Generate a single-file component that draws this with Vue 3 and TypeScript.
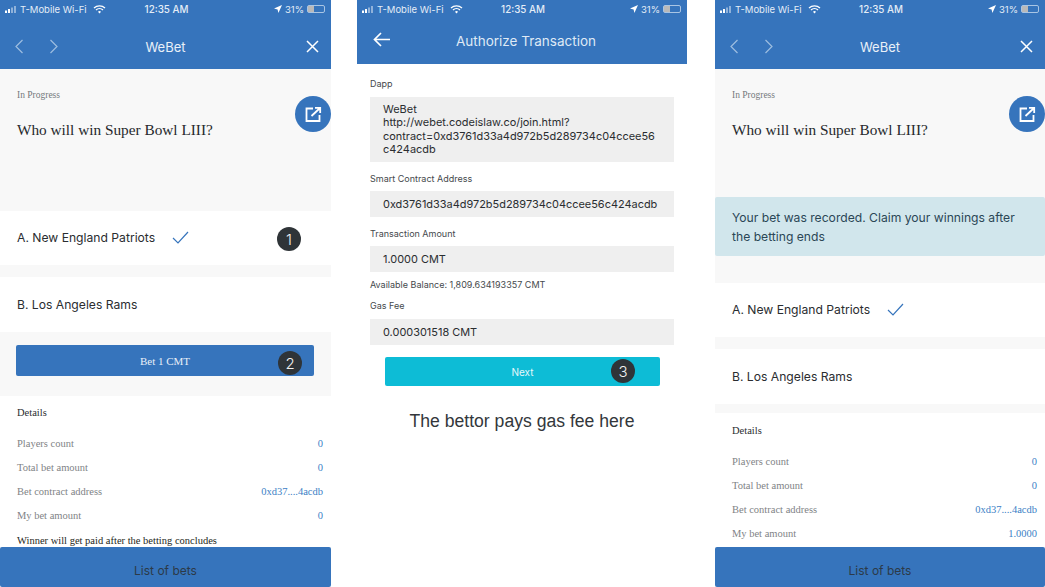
<script setup lang="ts">
interface DetailRow { label: string; value: string }
interface BetScreen {
  id: string;
  alert: string;
  badge: boolean;
  details: DetailRow[];
  footnote: string;
}

const contract = '0xd37....4acdb';

const screens: BetScreen[] = [
  {
    id: 'before',
    alert: '',
    badge: true,
    details: [
      { label: 'Players count', value: '0' },
      { label: 'Total bet amount', value: '0' },
      { label: 'Bet contract address', value: contract },
      { label: 'My bet amount', value: '0' },
    ],
    footnote: 'Winner will get paid after the betting concludes',
  },
  {
    id: 'after',
    alert: 'Your bet was recorded. Claim your winnings after the betting ends',
    badge: false,
    details: [
      { label: 'Players count', value: '0' },
      { label: 'Total bet amount', value: '0' },
      { label: 'Bet contract address', value: contract },
      { label: 'My bet amount', value: '1.0000' },
    ],
    footnote: '',
  },
];
</script>

<template>
  <div class="page">
    <template v-for="(s, i) in screens" :key="s.id">
      <section class="phone" :class="s.id">
        <div class="status">
          <span class="st-left">
            <svg class="signal" width="12" height="7" viewBox="0 0 12 7">
              <rect x="0" y="4.5" width="2" height="2.5" fill="#fff" />
              <rect x="3" y="3" width="2" height="4" fill="#fff" />
              <rect x="6" y="1.5" width="2" height="5.5" fill="#fff" opacity=".45" />
              <rect x="9" y="0" width="2" height="7" fill="#fff" opacity=".45" />
            </svg>
            T-Mobile Wi-Fi
            <svg class="wifi" width="13" height="9" viewBox="0 0 13 9" fill="none" stroke="#fff" stroke-width="1.3">
              <path d="M1 3a8 8 0 0 1 11 0M3 5a5 5 0 0 1 7 0" />
              <path d="M6.5 8.6 5 6.7a2.2 2.2 0 0 1 3 0z" fill="#fff" stroke="none" />
            </svg>
          </span>
          <span class="st-time">12:35 AM</span>
          <span class="st-right">
            <svg width="8" height="8" viewBox="0 0 8 8"><path d="M8 0 0 3.6l3.6.8.8 3.6z" fill="#fff" /></svg>
            31%
            <span class="battery"><i></i></span>
          </span>
        </div>
        <header class="nav">
          <span class="nav-arrows">
            <svg width="10" height="15" viewBox="0 0 10 15" fill="none" stroke="#9dbde0" stroke-width="1.2"><path d="M8.5 1 2 7.5 8.5 14" /></svg>
            <svg width="10" height="15" viewBox="0 0 10 15" fill="none" stroke="#9dbde0" stroke-width="1.2"><path d="M1.5 1 8 7.5 1.5 14" /></svg>
          </span>
          <span class="nav-title">WeBet</span>
          <svg class="nav-close" width="13" height="13" viewBox="0 0 13 13" stroke="#fff" stroke-width="1.5"><path d="M1 1l11 11M12 1 1 12" /></svg>
        </header>

        <main class="body">
          <div class="intro">
            <p class="state">In Progress</p>
            <h1 class="question">Who will win Super Bowl LIII?</h1>
            <span class="fab">
              <svg width="17" height="17" viewBox="0 0 17 17" fill="none" stroke="#fff" stroke-width="1.8">
                <path d="M8 2.5H1.5v12.5h13V9" />
                <path d="M6.5 10 14.5 2.5M10 1.8h5.2V7" />
              </svg>
            </span>
          </div>

          <div v-if="s.alert" class="alert">{{ s.alert }}</div>

          <div class="option first">
            A. New England Patriots
            <svg class="tick" width="17" height="13" viewBox="0 0 17 13" fill="none" stroke="#3674bc" stroke-width="1.2"><path d="M1 7l5 5L16 1" /></svg>
            <span v-if="s.badge" class="badge one">1</span>
          </div>
          <div class="option second">B. Los Angeles Rams</div>

          <div v-if="s.badge" class="bet-wrap">
            <button class="bet">Bet 1 CMT<span class="badge two">2</span></button>
          </div>

          <div class="details">
            <h2 class="details-title">Details</h2>
            <div v-for="row in s.details" :key="row.label" class="detail-row">
              <span class="detail-label">{{ row.label }}</span>
              <span class="detail-value">{{ row.value }}</span>
            </div>
            <p v-if="s.footnote" class="footnote">{{ s.footnote }}</p>
          </div>
        </main>

        <footer class="list-bar">List of bets</footer>
      </section>

      <section v-if="i === 0" class="phone auth">
        <div class="status">
          <span class="st-left">
            <svg class="signal" width="12" height="7" viewBox="0 0 12 7">
              <rect x="0" y="4.5" width="2" height="2.5" fill="#fff" />
              <rect x="3" y="3" width="2" height="4" fill="#fff" />
              <rect x="6" y="1.5" width="2" height="5.5" fill="#fff" opacity=".45" />
              <rect x="9" y="0" width="2" height="7" fill="#fff" opacity=".45" />
            </svg>
            T-Mobile Wi-Fi
            <svg class="wifi" width="13" height="9" viewBox="0 0 13 9" fill="none" stroke="#fff" stroke-width="1.3">
              <path d="M1 3a8 8 0 0 1 11 0M3 5a5 5 0 0 1 7 0" />
              <path d="M6.5 8.6 5 6.7a2.2 2.2 0 0 1 3 0z" fill="#fff" stroke="none" />
            </svg>
          </span>
          <span class="st-time">12:35 AM</span>
          <span class="st-right">
            <svg width="8" height="8" viewBox="0 0 8 8"><path d="M8 0 0 3.6l3.6.8.8 3.6z" fill="#fff" /></svg>
            31%
            <span class="battery"><i></i></span>
          </span>
        </div>
        <header class="auth-nav">
          <svg class="auth-back" width="17" height="15" viewBox="0 0 17 15" fill="none" stroke="#fff" stroke-width="1.7"><path d="M8 1 1.5 7.5 8 14M1.5 7.5H17" /></svg>
          <span class="auth-title">Authorize Transaction</span>
        </header>

        <main class="form">
          <label class="f-label wide">Dapp</label>
          <div class="f-box multi">WeBet<br />http://webet.codeislaw.co/join.html?<br />contract=0xd3761d33a4d972b5d289734c04ccee56<br />c424acdb</div>
          <label class="f-label">Smart Contract Address</label>
          <div class="f-box">0xd3761d33a4d972b5d289734c04ccee56c424acdb</div>
          <label class="f-label">Transaction Amount</label>
          <div class="f-box">1.0000 CMT</div>
          <p class="balance">Available Balance: 1,809.634193357 CMT</p>
          <label class="f-label wide">Gas Fee</label>
          <div class="f-box">0.000301518 CMT</div>
          <button class="next">Next<span class="badge three">3</span></button>
          <p class="note">The bettor pays gas fee here</p>
        </main>
      </section>
    </template>
  </div>
</template>

<style scoped>
.page {
  width: 1045px;
  height: 587px;
  display: flex;
  background: #fff;
  overflow: hidden;
  font-family: Inter, "Liberation Sans", sans-serif;
}

.phone {
  width: 331px;
  flex: none;
  height: 587px;
  display: flex;
  flex-direction: column;
  overflow: hidden;
  background: #f8f8f8;
}
.phone.auth {
  width: 330px;
  margin: 0 28px 0 26px;
  background: #fff;
}
.phone.after {
  width: 330px;
}

.status {
  height: 20px;
  flex: none;
  background: #3674bc;
  color: #e4edf7;
  font-size: 9.5px;
  display: grid;
  grid-template-columns: 1fr auto 1fr;
  align-items: center;
  padding: 0 6px 2px 5px;
  box-sizing: border-box;
}
.st-left {
  display: flex;
  align-items: center;
  gap: 3px;
}
.wifi {
  margin-left: 3px;
}
.st-time {
  font-weight: 500;
  font-size: 9.8px;
  padding-left: 3px;
}
.st-right {
  display: flex;
  align-items: center;
  justify-content: flex-end;
  gap: 3px;
}
.battery {
  width: 18px;
  height: 8px;
  border: 1px solid #a9c5e4;
  border-radius: 2px;
  box-sizing: border-box;
  display: block;
}
.battery i {
  display: block;
  width: 6px;
  height: 6px;
  background: #b9b9b9;
}

.nav {
  height: 49px;
  flex: none;
  background: #3674bc;
  color: #e9f0f8;
  display: flex;
  align-items: center;
  justify-content: space-between;
  padding: 4px 12px 0 14px;
  box-sizing: border-box;
  position: relative;
}
.nav-arrows {
  display: flex;
  gap: 25px;
}
.nav-title {
  position: absolute;
  left: 0;
  right: 0;
  text-align: center;
  font-size: 13px;
}

.body {
  flex: 1;
  min-height: 0;
  overflow: hidden;
}
.intro {
  height: 142px;
  padding: 21px 17px 0;
  box-sizing: border-box;
  position: relative;
  font-family: "Liberation Serif", serif;
}
.after .intro {
  height: 128px;
}
.state {
  margin: 0;
  font-size: 9.5px;
  line-height: 11px;
  color: #75797c;
}
.question {
  margin: 19px 0 0;
  font-size: 15.3px;
  line-height: 20px;
  font-weight: 400;
  color: #26292c;
}
.fab {
  position: absolute;
  top: 27px;
  right: 0;
  width: 36px;
  height: 36px;
  border-radius: 50%;
  background: #3674bc;
  display: flex;
  align-items: center;
  justify-content: center;
}

.alert {
  height: 59px;
  padding: 11px 17px 0;
  box-sizing: border-box;
  background: #d1e6ec;
  color: #2b4756;
  font-size: 12.15px;
  line-height: 19px;
  border-radius: 2px;
  margin-bottom: 27px;
}

.option {
  height: 54px;
  background: #fff;
  color: #2a2d30;
  font-size: 12.15px;
  display: flex;
  align-items: center;
  padding: 0 17px 1px;
  box-sizing: border-box;
  position: relative;
}
.option.first {
  margin-bottom: 12px;
}
.option.second {
  height: 55px;
}
.tick {
  margin-left: 17px;
}

.bet-wrap {
  padding: 13px 17px 20px 16px;
}
.bet {
  display: block;
  width: 100%;
  height: 31px;
  border: 0;
  border-radius: 2px;
  background: #3674bc;
  color: #e9f0f8;
  font-family: "Liberation Serif", serif;
  font-size: 11px;
  position: relative;
  padding: 0;
}

.badge {
  position: absolute;
  width: 24px;
  height: 24px;
  border-radius: 50%;
  background: #2f3438;
  color: #f2f2f2;
  font-family: Inter, "Liberation Sans", sans-serif;
  font-size: 15px;
  font-weight: 300;
  display: flex;
  align-items: center;
  justify-content: center;
}
.badge.one {
  left: 277px;
  top: 16px;
}
.badge.two {
  left: 262px;
  top: 6px;
}
.badge.three {
  left: 226px;
  top: 2px;
}

.details {
  background: #fff;
  padding: 10px 8px 0 17px;
  height: 160px;
  box-sizing: border-box;
  font-family: "Liberation Serif", serif;
}
.after .details {
  margin-top: 9px;
  padding-top: 11px;
}
.details-title {
  margin: 0 0 11px;
  font-size: 10.5px;
  line-height: 14px;
  font-weight: 400;
  color: #2a2d30;
}
.detail-row {
  height: 24.2px;
  display: flex;
  align-items: center;
  justify-content: space-between;
  font-size: 10.5px;
}
.detail-label {
  color: #7f8386;
}
.detail-value {
  color: #3c7fc6;
}
.footnote {
  margin: 1px 0 0;
  font-size: 10.5px;
  line-height: 24px;
  color: #1d1f21;
}

.list-bar {
  height: 40px;
  flex: none;
  background: #3674bc;
  border-radius: 2px;
  color: #2c3a48;
  font-size: 12px;
  display: flex;
  align-items: center;
  justify-content: center;
  padding-top: 6px;
  box-sizing: border-box;
}

.auth-nav {
  height: 44px;
  flex: none;
  background: #3674bc;
  display: flex;
  align-items: center;
  position: relative;
  padding: 0 0 6px 16px;
  box-sizing: border-box;
}
.auth-title {
  position: absolute;
  left: 8px;
  right: 0;
  text-align: center;
  color: #dfe9f5;
  font-size: 13.5px;
  top: 13px;
}
.form {
  padding: 13px 13px 0;
  position: relative;
  color: #2a2d30;
}
.f-label {
  display: block;
  font-size: 9px;
  line-height: 13px;
  color: #45494c;
  margin: 0 0 6px;
}
.f-label.wide {
  margin-bottom: 7px;
}
.f-box {
  background: #efefef;
  height: 26px;
  padding: 0 13px;
  font-size: 10.95px;
  line-height: 26px;
  margin-bottom: 10px;
  white-space: nowrap;
}
.f-box.multi {
  height: 65px;
  line-height: 13.3px;
  padding-top: 6px;
  box-sizing: border-box;
}
.balance {
  margin: -4px 0 8px;
  font-size: 9px;
  line-height: 13px;
  color: #45494c;
}
.next {
  display: block;
  width: 275px;
  height: 29px;
  margin: 12px 0 0 15px;
  border: 0;
  border-radius: 2px;
  background: #0dbcd6;
  color: #e6f7fa;
  font-family: Inter, "Liberation Sans", sans-serif;
  font-size: 10px;
  position: relative;
  padding: 0;
}
.note {
  margin: 24px 0 0;
  text-align: center;
  font-family: "Liberation Sans", Arial, sans-serif;
  font-size: 17.6px;
  line-height: 22px;
  color: #33373b;
}
</style>
